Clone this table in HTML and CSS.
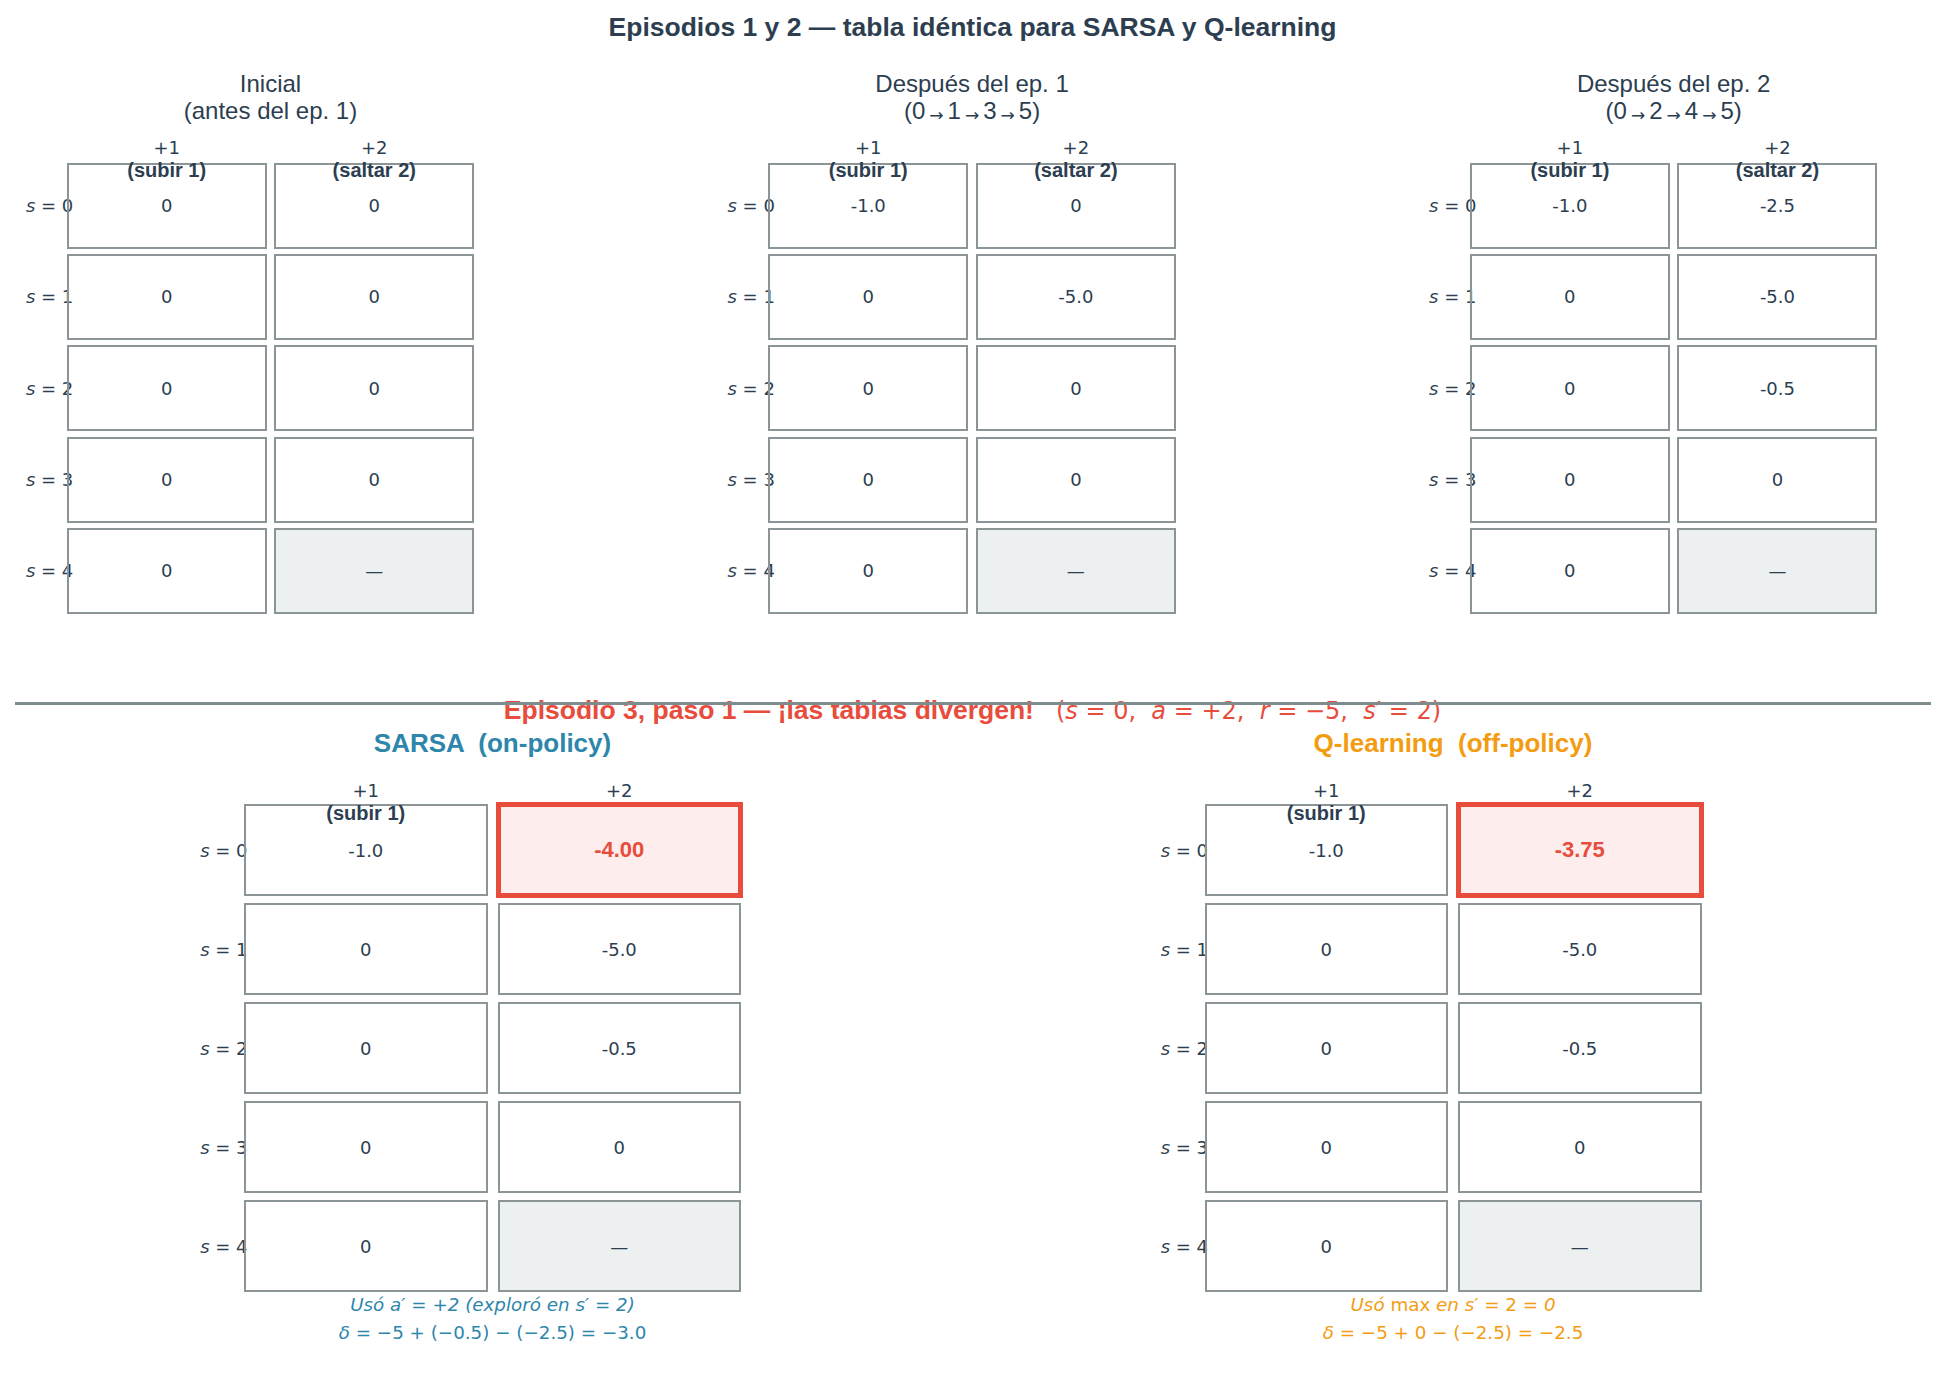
FILE: index.html
```html
<!DOCTYPE html>
<html lang="es">
<head>
<meta charset="utf-8">
<title>Episodios SARSA y Q-learning</title>
<link rel="stylesheet" href="styles.css">
</head>
<body>
<div class="page">
  <h1 class="title">Episodios 1 y 2 — tabla idéntica para SARSA y Q-learning</h1>

  <div class="top-row">
    <div class="panel">
      <div class="sub"><div class="ln">Inicial</div><div class="ln">(antes del ep. 1)</div></div>
      <div class="hd c2"><div class="m">+1</div><div class="b">(subir 1)</div></div>
      <div class="hd c3"><div class="m">+2</div><div class="b">(saltar 2)</div></div>
      <div class="lab"><i>s</i> = 0</div><div class="cell">0</div><div class="cell">0</div>
      <div class="lab"><i>s</i> = 1</div><div class="cell">0</div><div class="cell">0</div>
      <div class="lab"><i>s</i> = 2</div><div class="cell">0</div><div class="cell">0</div>
      <div class="lab"><i>s</i> = 3</div><div class="cell">0</div><div class="cell">0</div>
      <div class="lab"><i>s</i> = 4</div><div class="cell">0</div><div class="cell na">—</div>
    </div>

    <div class="panel">
      <div class="sub"><div class="ln">Después del ep. 1</div><div class="ln">(0<span class="ar">→</span>1<span class="ar">→</span>3<span class="ar">→</span>5)</div></div>
      <div class="hd c2"><div class="m">+1</div><div class="b">(subir 1)</div></div>
      <div class="hd c3"><div class="m">+2</div><div class="b">(saltar 2)</div></div>
      <div class="lab"><i>s</i> = 0</div><div class="cell">-1.0</div><div class="cell">0</div>
      <div class="lab"><i>s</i> = 1</div><div class="cell">0</div><div class="cell">-5.0</div>
      <div class="lab"><i>s</i> = 2</div><div class="cell">0</div><div class="cell">0</div>
      <div class="lab"><i>s</i> = 3</div><div class="cell">0</div><div class="cell">0</div>
      <div class="lab"><i>s</i> = 4</div><div class="cell">0</div><div class="cell na">—</div>
    </div>

    <div class="panel">
      <div class="sub"><div class="ln">Después del ep. 2</div><div class="ln">(0<span class="ar">→</span>2<span class="ar">→</span>4<span class="ar">→</span>5)</div></div>
      <div class="hd c2"><div class="m">+1</div><div class="b">(subir 1)</div></div>
      <div class="hd c3"><div class="m">+2</div><div class="b">(saltar 2)</div></div>
      <div class="lab"><i>s</i> = 0</div><div class="cell">-1.0</div><div class="cell">-2.5</div>
      <div class="lab"><i>s</i> = 1</div><div class="cell">0</div><div class="cell">-5.0</div>
      <div class="lab"><i>s</i> = 2</div><div class="cell">0</div><div class="cell">-0.5</div>
      <div class="lab"><i>s</i> = 3</div><div class="cell">0</div><div class="cell">0</div>
      <div class="lab"><i>s</i> = 4</div><div class="cell">0</div><div class="cell na">—</div>
    </div>
  </div>

  <div class="rule"></div>
  <div class="ep3"><b>Episodio 3, paso 1 — ¡las tablas divergen!</b><span class="ep3m">(<i>s</i> = 0,  <i>a</i> = +2,  <i>r</i> = −5,  <i>s</i>′ = 2)</span></div>

  <div class="bottom-row">
    <div class="panel big sarsa">
      <div class="ptitle">SARSA  (on-policy)</div>
      <div class="hd c2"><div class="m">+1</div><div class="b">(subir 1)</div></div>
      <div class="hd c3"><div class="m">+2</div></div>
      <div class="lab"><i>s</i> = 0</div><div class="cell">-1.0</div><div class="cell hot">-4.00</div>
      <div class="lab"><i>s</i> = 1</div><div class="cell">0</div><div class="cell">-5.0</div>
      <div class="lab"><i>s</i> = 2</div><div class="cell">0</div><div class="cell">-0.5</div>
      <div class="lab"><i>s</i> = 3</div><div class="cell">0</div><div class="cell">0</div>
      <div class="lab"><i>s</i> = 4</div><div class="cell">0</div><div class="cell na">—</div>
      <div class="cap"><div class="ln"><i>Usó a′ = +2 (exploró en s′ = 2)</i></div><div class="ln"><i>δ</i> = −5 + (−0.5) − (−2.5) = −3.0</div></div>
    </div>

    <div class="panel big qlearn">
      <div class="ptitle">Q-learning  (off-policy)</div>
      <div class="hd c2"><div class="m">+1</div><div class="b">(subir 1)</div></div>
      <div class="hd c3"><div class="m">+2</div></div>
      <div class="lab"><i>s</i> = 0</div><div class="cell">-1.0</div><div class="cell hot">-3.75</div>
      <div class="lab"><i>s</i> = 1</div><div class="cell">0</div><div class="cell">-5.0</div>
      <div class="lab"><i>s</i> = 2</div><div class="cell">0</div><div class="cell">-0.5</div>
      <div class="lab"><i>s</i> = 3</div><div class="cell">0</div><div class="cell">0</div>
      <div class="lab"><i>s</i> = 4</div><div class="cell">0</div><div class="cell na">—</div>
      <div class="cap"><div class="ln"><i>Usó</i> max <i>en s</i>′ = 2 = <i>0</i></div><div class="ln"><i>δ</i> = −5 + 0 − (−2.5) = −2.5</div></div>
    </div>
  </div>
</div>
</body>
</html>
```

FILE: styles.css
```css
html, body {
  margin: 0;
  padding: 0;
  background: #ffffff;
}

.page {
  width: 1945px;
  height: 1374px;
  color: #2c3e50;
  font-family: "Liberation Sans", Arial, sans-serif;
  overflow: hidden;
}

.title {
  margin: 0;
  padding-top: 11px;
  height: 32px;
  font-size: 26.5px;
  line-height: 32px;
  font-weight: bold;
  text-align: center;
}

.top-row {
  display: flex;
  margin-top: 28.25px;
  padding-left: 13.1px;
  gap: 240.4px;
}

.panel {
  display: grid;
  grid-template-columns: 46px 200px 200px;
  column-gap: 7.6px;
  row-gap: 5.3px;
}

.sub {
  grid-column: 2 / 4;
  text-align: center;
  font-size: 24px;
  margin-bottom: 7.1px;
}

.sub .ln {
  height: 26.5px;
  line-height: 26.5px;
  white-space: nowrap;
}

.ar {
  font-family: "DejaVu Sans", sans-serif;
  font-size: 17px;
  line-height: 0;
  margin: 0 4px;
  position: relative;
  top: 2px;
}

.hd {
  position: relative;
  z-index: 2;
  text-align: center;
  height: 45.4px;
  margin-bottom: -24.65px;
}

.hd.c2 { grid-column: 2; }
.hd.c3 { grid-column: 3; }

.hd .m {
  height: 22.7px;
  line-height: 22.7px;
  font-family: "DejaVu Sans", sans-serif;
  font-size: 18px;
}

.hd .b {
  height: 22.7px;
  line-height: 22.7px;
  font-size: 20px;
  font-weight: bold;
}

.lab {
  grid-column: 1;
  align-self: center;
  text-align: right;
  margin-right: -14.2px;
  font-family: "DejaVu Sans", sans-serif;
  font-size: 18px;
  white-space: nowrap;
}

.cell {
  position: relative;
  z-index: 1;
  box-sizing: border-box;
  height: 86px;
  border: 2px solid #8b9598;
  display: flex;
  align-items: center;
  justify-content: center;
  font-family: "DejaVu Sans", sans-serif;
  font-size: 18px;
}

.cell.na {
  background: #ecf0f1;
}

.rule {
  position: relative;
  z-index: 3;
  margin-top: 88.6px;
  margin-left: 15px;
  width: 1916px;
  height: 3px;
  background: #7f8c8d;
}

.ep3 {
  position: relative;
  z-index: 1;
  margin-top: -10.5px;
  height: 30px;
  display: flex;
  justify-content: center;
  align-items: baseline;
  color: #e74c3c;
  font-size: 26.5px;
  line-height: 30px;
  white-space: pre;
}

.ep3m {
  font-family: "DejaVu Sans", sans-serif;
  font-size: 24px;
  margin-left: 22px;
}

.bottom-row {
  display: flex;
  margin-top: 3px;
  padding-left: 188px;
  gap: 407.5px;
}

.panel.big {
  grid-template-columns: 46px 243.5px 243.5px;
  column-gap: 10px;
  row-gap: 6.9px;
}

.panel.big .ptitle {
  grid-column: 2 / 4;
  text-align: center;
  height: 30px;
  font-size: 26px;
  line-height: 30px;
  font-weight: bold;
  white-space: pre;
  margin-bottom: 14.95px;
}

.sarsa .ptitle, .sarsa .cap { color: #2e86ab; }
.qlearn .ptitle, .qlearn .cap { color: #f39c12; }

.panel.big .hd {
  height: 44.6px;
  margin-bottom: -26.85px;
}

.panel.big .hd .m,
.panel.big .hd .b {
  height: 22.3px;
  line-height: 22.3px;
}

.panel.big .lab {
  margin-right: -13.5px;
}

.panel.big .cell {
  height: 92px;
}

.cell.hot {
  z-index: 3;
  margin: -2px;
  border: 5px solid #e74c3c;
  background: #fdedec;
  color: #e74c3c;
  font-family: "Liberation Sans", Arial, sans-serif;
  font-weight: bold;
  font-size: 22px;
}

.panel.big .cell.hot {
  height: 96px;
}

.cap {
  grid-column: 2 / 4;
  margin-top: -8.4px;
  text-align: center;
  font-family: "DejaVu Sans", sans-serif;
  font-size: 18.3px;
  white-space: nowrap;
}

.cap .ln {
  height: 28.4px;
  line-height: 28.4px;
}
```
